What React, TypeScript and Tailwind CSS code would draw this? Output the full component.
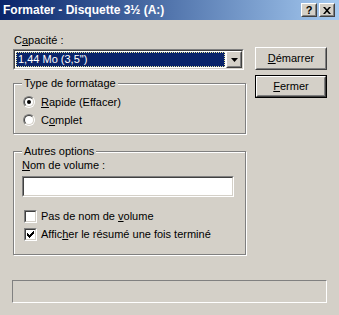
import React from 'react';

// Classic Windows 2000 "Formater" dialog

function Sunken({ className = '', children }: { className?: string; children?: React.ReactNode }) {
  return (
    <div className={`border border-t-[#808080] border-l-[#808080] border-b-white border-r-white ${className}`}>
      <div className="w-full h-full border border-t-[#404040] border-l-[#404040] border-b-[#d4d0c8] border-r-[#d4d0c8] bg-white">
        {children}
      </div>
    </div>
  );
}

function Raised({ className = '', children }: { className?: string; children?: React.ReactNode }) {
  return (
    <div className={`border border-t-white border-l-white border-b-[#404040] border-r-[#404040] bg-[#d4d0c8] ${className}`}>
      <div className="w-full h-full border border-t-[#d4d0c8] border-l-[#d4d0c8] border-b-[#808080] border-r-[#808080] flex items-center justify-center">
        {children}
      </div>
    </div>
  );
}

function GroupBox({ title, className = '', children }: { title: string; className?: string; children?: React.ReactNode }) {
  return (
    <div className={`relative border border-[#808080] shadow-[inset_1px_1px_0_#fff,1px_1px_0_#fff] ${className}`}>
      <span className="absolute left-[8px] top-[-7px] bg-[#d4d0c8] px-[2px] leading-[13px]">{title}</span>
      {children}
    </div>
  );
}

function Radio({ checked, children }: { checked?: boolean; children: React.ReactNode }) {
  return (
    <div className="flex items-center h-[18px]">
      <div className="w-[12px] h-[12px] rounded-full border border-t-[#808080] border-l-[#808080] border-b-white border-r-white">
        <div className="w-full h-full rounded-full border border-t-[#404040] border-l-[#404040] border-b-[#d4d0c8] border-r-[#d4d0c8] bg-white flex items-center justify-center">
          {checked && <div className="w-[4px] h-[4px] rounded-full bg-black" />}
        </div>
      </div>
      <span className="ml-[6px]">{children}</span>
    </div>
  );
}

function Check({ checked, children }: { checked?: boolean; children: React.ReactNode }) {
  return (
    <div className="flex items-center h-[18px]">
      <Sunken className="w-[13px] h-[13px]">
        {checked && (
          <svg width="9" height="9" viewBox="0 0 9 9" className="block">
            <path d="M1 3v3h1v1h1v1h1V7h1V6h1V5h1V4h1V1H7v1H6v1H5v1H4v1H3V4H2V3z" fill="#000" />
          </svg>
        )}
      </Sunken>
      <span className="ml-[4px]">{children}</span>
    </div>
  );
}

export default function App() {
  return (
    <div className="w-[339px] h-[315px] bg-[#d4d0c8] text-black text-[11px] leading-[13px] font-['Liberation_Sans',Arial,sans-serif] overflow-hidden">
      {/* Title bar */}
      <div className="h-[20px] flex items-center bg-gradient-to-r from-[#0a246a] to-[#a6caf0] pl-[3px] pr-[4px]">
        <span className="flex-1 text-white font-bold text-[12px]">Formater - Disquette 3½ (A:)</span>
        <Raised className="w-[16px] h-[14px]">
          <span className="font-bold text-[11px] leading-none">?</span>
        </Raised>
        <Raised className="w-[16px] h-[14px] ml-[2px]">
          <svg width="8" height="7" viewBox="0 0 8 7" className="block">
            <path d="M0 0h2l2 2.2L6 0h2L5 3.5 8 7H6L4 4.8 2 7H0l3-3.5z" fill="#000" />
          </svg>
        </Raised>
      </div>

      <div className="flex">
        {/* Left column */}
        <div className="ml-[13px] pt-[14px] w-[233px]">
          <div className="ml-[1px]">
            C<u>a</u>pacité :
          </div>
          <Sunken className="mt-[2px] w-[231px] h-[21px]">
            <div className="flex h-full">
              <div className="flex-1 p-[1px]">
                <div className="h-full bg-[#0a246a] text-white border border-dotted border-[#e8e8a0] pl-[1px] flex items-center">
                  1,44 Mo (3,5")
                </div>
              </div>
              <Raised className="w-[16px] h-[17px]">
                <svg width="7" height="4" viewBox="0 0 7 4" className="block">
                  <path d="M0 0h7L3.5 4z" fill="#000" />
                </svg>
              </Raised>
            </div>
          </Sunken>

          <GroupBox title="Type de formatage" className="mt-[13px] h-[51px] pt-[9px] pl-[9px]">
            <Radio checked>
              <u>R</u>apide (Effacer)
            </Radio>
            <Radio>
              C<u>o</u>mplet
            </Radio>
          </GroupBox>

          <GroupBox title="Autres options" className="mt-[17px] h-[104px] pt-[7px] pl-[8px]">
            <div>
              <u>N</u>om de volume :
            </div>
            <Sunken className="mt-[4px] w-[212px] h-[21px]" />
            <div className="mt-[10px] pl-[2px]">
              <Check>
                Pas de nom de <u>v</u>olume
              </Check>
              <Check checked>
                Affic<u>h</u>er le résumé une fois terminé
              </Check>
            </div>
          </GroupBox>
        </div>

        {/* Right column */}
        <div className="ml-[9px] pt-[27px] flex flex-col gap-[5px]">
          <Raised className="w-[72px] h-[23px]">
            <span>
              <u>D</u>émarrer
            </span>
          </Raised>
          <div className="w-[72px] h-[23px] border border-black">
            <Raised className="w-full h-full">
              <span>
                <u>F</u>ermer
              </span>
            </Raised>
          </div>
        </div>
      </div>

      {/* Progress bar */}
      <div className="ml-[12px] mt-[25px] w-[315px] h-[23px] border border-t-[#808080] border-l-[#808080] border-b-white border-r-white" />
    </div>
  );
}
